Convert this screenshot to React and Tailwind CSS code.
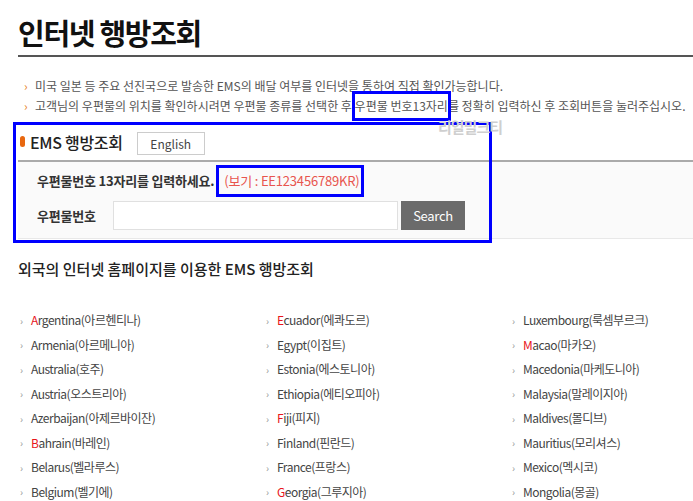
const COUNTRIES = [
  [
    ['A', 'rgentina', '아르헨티나'],
    ['', 'Armenia', '아르메니아'],
    ['', 'Australia', '호주'],
    ['', 'Austria', '오스트리아'],
    ['', 'Azerbaijan', '아제르바이잔'],
    ['B', 'ahrain', '바레인'],
    ['', 'Belarus', '벨라루스'],
    ['', 'Belgium', '벨기에'],
  ],
  [
    ['E', 'cuador', '에콰도르'],
    ['', 'Egypt', '이집트'],
    ['', 'Estonia', '에스토니아'],
    ['', 'Ethiopia', '에티오피아'],
    ['F', 'iji', '피지'],
    ['', 'Finland', '핀란드'],
    ['', 'France', '프랑스'],
    ['G', 'eorgia', '그루지아'],
  ],
  [
    ['', 'Luxembourg', '룩셈부르크'],
    ['M', 'acao', '마카오'],
    ['', 'Macedonia', '마케도니아'],
    ['', 'Malaysia', '말레이지아'],
    ['', 'Maldives', '몰디브'],
    ['', 'Mauritius', '모리셔스'],
    ['', 'Mexico', '멕시코'],
    ['', 'Mongolia', '몽골'],
  ],
];

const FONT = "font-['Noto_Sans_CJK_KR','Noto_Sans',sans-serif]";

function CountryItem({ item }) {
  const [red, rest, kor] = item;
  return (
    <li className="flex items-center h-[24.5px]">
      <span className="w-[13px] pl-[2px] text-[10px] text-[#999]">›</span>
      <span className="text-[12px] tracking-[-0.5px] text-[#444]">
        {red && <span className="text-[#e8141b]">{red}</span>}
        {rest}({kor})
      </span>
    </li>
  );
}

export default function App() {
  return (
    <div className={`w-[693px] h-[501px] overflow-hidden bg-white ${FONT}`}>
      <div className="pl-[18px]">
        {/* 페이지 타이틀 */}
        <h1 className="pt-[12px] h-[55px] text-[29px] leading-[40px] font-bold tracking-[-1.3px] text-[#111]">
          인터넷 행방조회
        </h1>
        <div className="h-[2px] bg-[#555]" />

        {/* 안내 문구 */}
        <ul className="mt-[19px] pl-[6px] text-[12px] leading-[20px] tracking-[0px] text-[#555]">
          <li className="flex whitespace-nowrap">
            <span className="w-[11px] text-[#e8862c]">›</span>
            미국 일본 등 주요 선진국으로 발송한 EMS의 배달 여부를 인터넷을 통하여 직접 확인가능합니다.
          </li>
          <li className="flex whitespace-nowrap">
            <span className="w-[11px] text-[#e8862c]">›</span>
            고객님의 우편물의 위치를 확인하시려면 우편물 종류를 선택한 후&nbsp;
            <span className="relative">
              우편물 번호13자리
              <span className="absolute -left-[3px] -right-[3px] -top-[5px] -bottom-[5px] border-[3px] border-[#0000ff]" />
            </span>
            를 정확히 입력하신 후 조회버튼을 눌러주십시오.
          </li>
        </ul>

        {/* EMS 행방조회 */}
        <div className="relative mt-[4px]">
          <div className="absolute -left-[5px] top-[2px] w-[479px] h-[121px] border-[3px] border-[#0000ff]" />
          <span className="absolute left-[420px] top-[-4px] text-[15px] font-bold text-[#cfcfcf] tracking-[-1px]">
            리얼밀크티
          </span>
          <div className="flex items-center h-[40px] pt-[3px]">
            <span className="ml-[2px] w-[5px] h-[11px] rounded-full bg-[#e8670f]" />
            <span className="ml-[5px] text-[16px] font-medium tracking-[-0.3px] text-[#222]">EMS 행방조회</span>
            <span className="ml-[14px] mt-[4px] w-[68px] h-[23px] border border-[#ccc] flex items-center justify-center text-[12px] text-[#444]">
              English
            </span>
          </div>
          <div className="border-t-2 border-[#aaa] border-b border-b-[#e8e8e8] bg-[#fafafa] h-[79px] pl-[19px] pt-[6px]">
            <div className="flex items-center h-[26px]">
              <span className="text-[13px] font-bold tracking-[-0.2px] text-[#333]">우편물번호 13자리를 입력하세요.</span>
              <span className="relative ml-[10px] text-[13px] tracking-[-0.2px] text-[#e8554e]">
                (보기 : EE123456789KR)
                <span className="absolute -left-[8px] -right-[5px] -top-[6px] -bottom-[6px] border-[3px] border-[#0000ff]" />
              </span>
            </div>
            <div className="flex items-center mt-[7px]">
              <span className="w-[76px] text-[13px] font-bold tracking-[-0.2px] text-[#333]">우편물번호</span>
              <div className="w-[285px] h-[29px] bg-white border border-[#e0e0e0]" />
              <button className="ml-[3px] w-[64px] h-[29px] bg-[#6b6b6b] text-white text-[13px] tracking-[-0.3px]">
                Search
              </button>
            </div>
          </div>
        </div>

        {/* 외국 홈페이지 이용 */}
        <h2 className="mt-[19px] text-[15px] font-medium tracking-[0px] text-[#222] leading-[22px]">
          외국의 인터넷 홈페이지를 이용한 EMS 행방조회
        </h2>
        <div className="grid grid-cols-[246px_246px_1fr] mt-[28px]">
          {COUNTRIES.map((col, i) => (
            <ul key={i}>
              {col.map((item) => (
                <CountryItem key={item[1]} item={item} />
              ))}
            </ul>
          ))}
        </div>
      </div>
    </div>
  );
}
